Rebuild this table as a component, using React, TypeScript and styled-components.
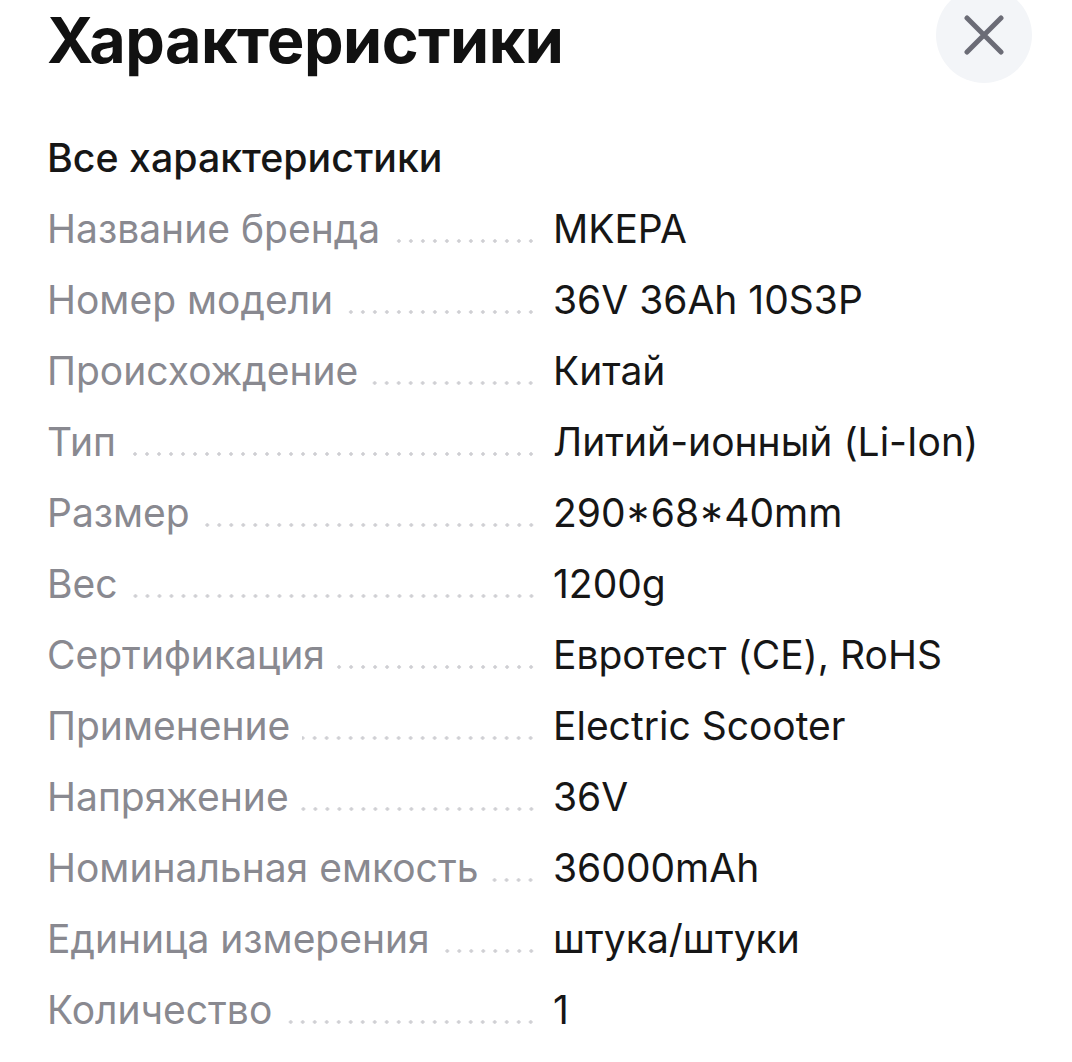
import React from "react";
import styled, { createGlobalStyle } from "styled-components";

const Global = createGlobalStyle`
  html, body { margin: 0; padding: 0; background: #ffffff; }
  body { font-family: Inter, "Noto Sans", sans-serif; -webkit-font-smoothing: antialiased; }
  * { box-sizing: border-box; }
`;

const Page = styled.div`
  width: 1072px;
  height: 1062px;
  overflow: hidden;
  padding: 0 40px 0 47px;
  background: #fff;
`;

const Header = styled.header`
  display: flex;
  justify-content: space-between;
  align-items: flex-start;
  height: 122px;
`;

const Title = styled.h1`
  margin: 0;
  padding-top: 2px;
  font-size: 62.8px;
  line-height: 76px;
  font-weight: 700;
  color: #111111;
  letter-spacing: -0.5px;
`;

const CloseButton = styled.button`
  width: 96px;
  height: 96px;
  margin-top: -13px;
  border: none;
  border-radius: 50%;
  background: #f3f5f8;
  display: flex;
  align-items: center;
  justify-content: center;
  padding: 0;
  cursor: pointer;
`;

const Subtitle = styled.h2`
  margin: 0;
  font-size: 39.3px;
  line-height: 71px;
  font-weight: 500;
  color: #161616;
`;

const List = styled.dl`
  margin: 0;
  display: grid;
  grid-template-columns: 490px 1fr;
  column-gap: 16px;
`;

const Label = styled.dt`
  display: flex;
  align-items: baseline;
  font-size: 39px;
  line-height: 71px;
  color: #898990;
  white-space: nowrap;
`;

const Leader = styled.span`
  flex: 1;
  margin-left: 12px;
  height: 4px;
  align-self: baseline;
  background-image: radial-gradient(circle, #cfcfd3 1.5px, transparent 1.9px);
  background-size: 12px 4px;
  background-position: right center;
  background-repeat: repeat-x;
`;

const Value = styled.dd`
  margin: 0;
  font-size: 39px;
  line-height: 71px;
  color: #161616;
  white-space: nowrap;
`;

const specs: [string, string][] = [
  ["Название бренда", "MKEPA"],
  ["Номер модели", "36V 36Ah 10S3P"],
  ["Происхождение", "Китай"],
  ["Тип", "Литий-ионный (Li-Ion)"],
  ["Размер", "290*68*40mm"],
  ["Вес", "1200g"],
  ["Сертификация", "Евротест (CE), RoHS"],
  ["Применение", "Electric Scooter"],
  ["Напряжение", "36V"],
  ["Номинальная емкость", "36000mAh"],
  ["Единица измерения", "штука/штуки"],
  ["Количество", "1"],
];

export default function App() {
  return (
    <>
      <Global />
      <Page>
        <Header>
          <Title>Характеристики</Title>
          <CloseButton aria-label="Закрыть">
            <svg width="40" height="40" viewBox="0 0 40 40" fill="none">
              <path d="M3 3L37 37M37 3L3 37" stroke="#6b6c76" strokeWidth="5" strokeLinecap="round" />
            </svg>
          </CloseButton>
        </Header>
        <Subtitle>Все характеристики</Subtitle>
        <List>
          {specs.map(([k, v]) => (
            <React.Fragment key={k}>
              <Label>
                {k}
                <Leader />
              </Label>
              <Value>{v}</Value>
            </React.Fragment>
          ))}
        </List>
      </Page>
    </>
  );
}
